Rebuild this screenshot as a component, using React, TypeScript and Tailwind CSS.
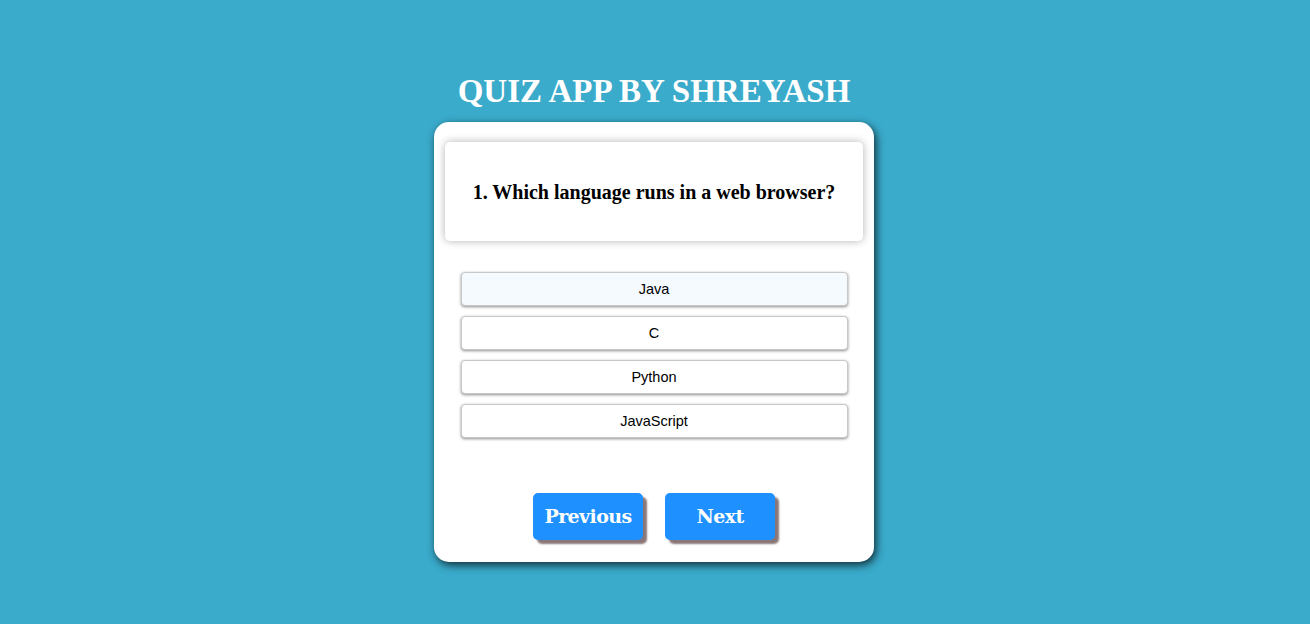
import React, { useState } from 'react';

// Quiz questions
const questions = [
  {
    id: 1,
    text: 'Which language runs in a web browser?',
    options: ['Java', 'C', 'Python', 'JavaScript'],
  },
];

const App: React.FC = () => {
  const [index, setIndex] = useState(0);
  const q = questions[index];

  return (
    <div className="min-h-screen w-full bg-[#3aabcb] flex flex-col items-center pt-[72px] pr-[2px]">
      <h1 className="text-white font-bold text-[33px] leading-[38px] font-['Liberation_Serif',serif] mb-[12px]">
        QUIZ APP BY SHREYASH
      </h1>

      {/* Card */}
      <div className="w-[440px] h-[440px] bg-white rounded-[15px] shadow-[2px_3px_9px_rgba(0,0,0,0.75)] flex flex-col items-center pt-[20px] px-[11px]">
        <div className="w-full h-[99px] rounded-[5px] bg-white shadow-[0_0_8px_rgba(0,0,0,0.3)] flex items-center justify-center">
          <h2 className="font-bold text-[20px] text-black font-['Liberation_Serif',serif]">
            {q.id}. {q.text}
          </h2>
        </div>

        <div className="w-[387px] flex flex-col gap-[10px] mt-[31px]">
          {q.options.map((opt, i) => (
            <button
              key={opt}
              className={`h-[34px] w-full pt-[2px] rounded-[4px] border border-[#c8c8c8] shadow-[0_1px_3px_rgba(0,0,0,0.45)] text-[14.5px] text-black font-['Liberation_Sans',Arial,sans-serif] ${
                i === 0 ? 'bg-[#f5faff]' : 'bg-white'
              }`}
            >
              {opt}
            </button>
          ))}
        </div>

        <div className="flex gap-[22px] mt-[55px]">
          <button
            onClick={() => setIndex(Math.max(0, index - 1))}
            className="w-[110px] h-[47px] rounded-[5px] bg-[#1e90ff] text-white font-bold text-[19px] font-['DejaVu_Serif',serif] tracking-[-0.6px] shadow-[4px_4px_2px_#8a7676]"
          >
            Previous
          </button>
          <button
            onClick={() => setIndex(Math.min(questions.length - 1, index + 1))}
            className="w-[110px] h-[47px] rounded-[5px] bg-[#1e90ff] text-white font-bold text-[19px] font-['DejaVu_Serif',serif] tracking-[-0.6px] shadow-[4px_4px_2px_#8a7676]"
          >
            Next
          </button>
        </div>
      </div>
    </div>
  );
};

export default App;
